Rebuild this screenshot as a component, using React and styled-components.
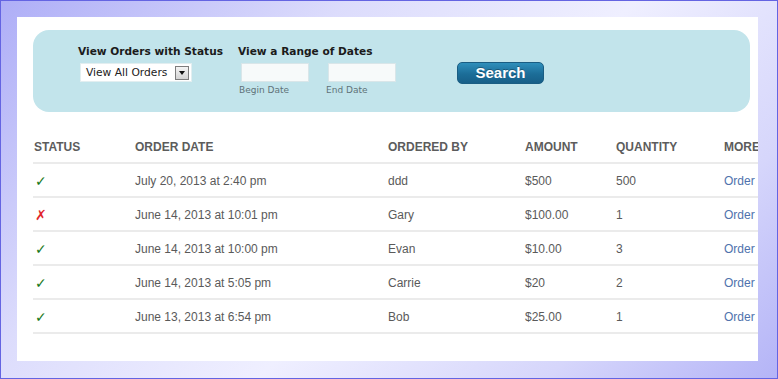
import React from 'react';
import styled, { createGlobalStyle } from 'styled-components';

const GlobalStyle = createGlobalStyle`
  html, body {
    margin: 0;
    padding: 0;
  }
  body {
    font-family: "Liberation Sans", Arial, sans-serif;
  }
`;

const Frame = styled.div`
  box-sizing: border-box;
  width: 778px;
  height: 379px;
  border: 1px solid #6464e2;
  padding: 16px 19px 17px 16px;
  background: linear-gradient(135deg, #aeaef7 0%, #dcdcfc 30%, #efefff 55%, #d6d6fb 80%, #b4b4f7 100%);
`;

const Sheet = styled.div`
  box-sizing: border-box;
  height: 100%;
  background: #fff;
  padding: 13px 8px 0 16px;
  overflow: hidden;
`;

const FilterPanel = styled.div`
  box-sizing: border-box;
  height: 82px;
  border-radius: 16px;
  background: #c2e4eb;
  display: flex;
  align-items: flex-start;
  padding: 14px 0 0 45px;
`;

const Group = styled.div`
  display: flex;
  flex-direction: column;
  width: ${p => p.$width}px;
`;

const Label = styled.div`
  font-family: "DejaVu Sans", Verdana, sans-serif;
  font-weight: bold;
  font-size: 10.6px;
  line-height: 14px;
  color: #1b1b1b;
  white-space: nowrap;
`;

const Controls = styled.div`
  display: flex;
  gap: 19px;
  margin-top: 5px;
  padding-left: ${p => p.$indent}px;
`;

const SelectBox = styled.div`
  box-sizing: border-box;
  width: 112px;
  height: 19px;
  background: #fff;
  border: 1px solid #e2eef0;
  display: flex;
  align-items: center;
  justify-content: space-between;
  padding: 0 2px 0 5px;
  font-family: "DejaVu Sans", Verdana, sans-serif;
  font-size: 10.7px;
  color: #222;
`;

const Arrow = styled.span`
  box-sizing: border-box;
  width: 14px;
  height: 14px;
  border: 1px solid #7d7d7d;
  background: linear-gradient(#f4f4f4, #d4d4d4);
  display: flex;
  align-items: center;
  justify-content: center;
  &::after {
    content: '';
    border-left: 3px solid transparent;
    border-right: 3px solid transparent;
    border-top: 4px solid #111;
  }
`;

const Field = styled.div`
  display: flex;
  flex-direction: column;
`;

const DateInput = styled.div`
  box-sizing: border-box;
  width: 68px;
  height: 19px;
  background: #f7fafa;
  border: 1px solid #d9e6e9;
`;

const SubLabel = styled.div`
  font-family: "DejaVu Sans", Verdana, sans-serif;
  font-size: 9px;
  line-height: 13px;
  margin-top: 2px;
  margin-left: -2px;
  color: #5f7278;
`;

const SearchButton = styled.button`
  box-sizing: border-box;
  width: 87px;
  height: 22px;
  margin: 18px 0 0 61px;
  border-radius: 5px;
  border: 1px solid #1a5d83;
  background: linear-gradient(#2f8fbb, #1c6d98 55%, #175f88);
  color: #fff;
  font-family: "Liberation Sans", Arial, sans-serif;
  font-weight: bold;
  font-size: 15px;
  line-height: 18px;
  padding: 0;
  text-shadow: 0 -1px 0 rgba(0, 0, 0, 0.3);
`;

const Table = styled.div`
  margin-top: 18px;
  width: 790px;
`;

const Row = styled.div`
  display: grid;
  grid-template-columns: 101px 253px 137px 91px 108px 100px;
  height: 34px;
  align-items: center;
  border-bottom: 2px solid #ebebeb;
  box-sizing: border-box;
  padding: 2px 0 0 1px;
  font-size: 12px;
  color: ${p => (p.$head ? '#5c5c5c' : '#5a5a5a')};
  font-weight: ${p => (p.$head ? 'bold' : 'normal')};
`;

const Mark = styled.span`
  font-family: "DejaVu Sans", sans-serif;
  font-size: 14px;
  font-weight: bold;
  padding-left: 1px;
  color: ${p => (p.$ok ? '#1a781a' : '#e1262a')};
`;

const Link = styled.a`
  color: #4f73ad;
  text-decoration: none;
`;

const orders = [
  { ok: true, date: 'July 20, 2013 at 2:40 pm', by: 'ddd', amount: '$500', qty: '500' },
  { ok: false, date: 'June 14, 2013 at 10:01 pm', by: 'Gary', amount: '$100.00', qty: '1' },
  { ok: true, date: 'June 14, 2013 at 10:00 pm', by: 'Evan', amount: '$10.00', qty: '3' },
  { ok: true, date: 'June 14, 2013 at 5:05 pm', by: 'Carrie', amount: '$20', qty: '2' },
  { ok: true, date: 'June 13, 2013 at 6:54 pm', by: 'Bob', amount: '$25.00', qty: '1' },
];

export default function App() {
  return (
    <>
      <GlobalStyle />
      <Frame>
        <Sheet>
          <FilterPanel>
            <Group $width={160}>
              <Label>View Orders with Status</Label>
              <Controls $indent={2}>
                <SelectBox>
                  View All Orders
                  <Arrow />
                </SelectBox>
              </Controls>
            </Group>
            <Group $width={158}>
              <Label>View a Range of Dates</Label>
              <Controls $indent={3}>
                <Field>
                  <DateInput />
                  <SubLabel>Begin Date</SubLabel>
                </Field>
                <Field>
                  <DateInput />
                  <SubLabel>End Date</SubLabel>
                </Field>
              </Controls>
            </Group>
            <SearchButton>Search</SearchButton>
          </FilterPanel>
          <Table>
            <Row $head>
              <span>STATUS</span>
              <span>ORDER DATE</span>
              <span>ORDERED BY</span>
              <span>AMOUNT</span>
              <span>QUANTITY</span>
              <span>MORE</span>
            </Row>
            {orders.map((o, i) => (
              <Row key={i}>
                <Mark $ok={o.ok}>{o.ok ? '✓' : '✗'}</Mark>
                <span>{o.date}</span>
                <span>{o.by}</span>
                <span>{o.amount}</span>
                <span>{o.qty}</span>
                <Link href="#">Order</Link>
              </Row>
            ))}
          </Table>
        </Sheet>
      </Frame>
    </>
  );
}
